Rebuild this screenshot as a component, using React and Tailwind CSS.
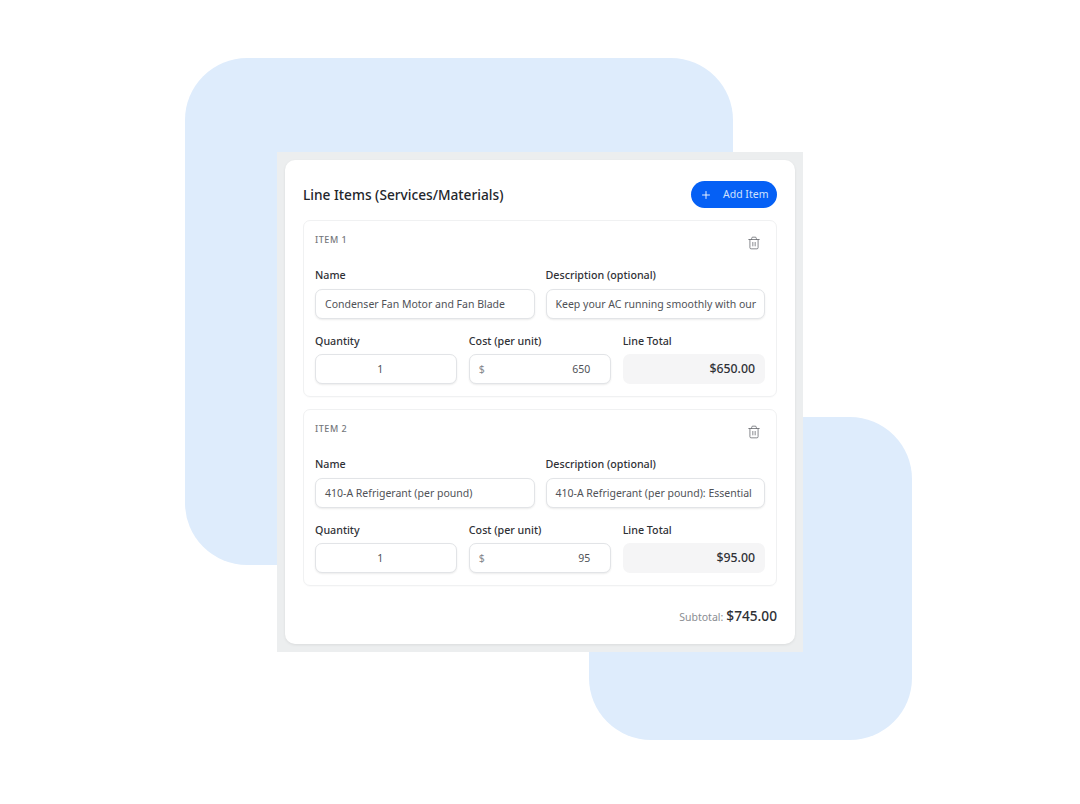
import { Plus, Trash2 } from 'lucide-react';

const items = [
  { id: 1, name: 'Condenser Fan Motor and Fan Blade', desc: 'Keep your AC running smoothly with our', cost: '650', total: '$650.00' },
  { id: 2, name: '410-A Refrigerant (per pound)', desc: '410-A Refrigerant (per pound): Essential', cost: '95', total: '$95.00' },
];

function Label({ children, className = 'mb-[7px]' }) {
  return <div className={`h-[13px] flex items-center text-[10.7px] font-medium text-[#2f3136] ${className}`}>{children}</div>;
}

const boxCls = 'h-[30px] rounded-[7px] border border-[#e2e4e7] bg-white shadow-[0_1px_2px_rgba(0,0,0,0.08)] flex items-center pt-px text-[10.5px] text-[#505257]';

function LineItem({ item }) {
  return (
    <div className="h-[177px] rounded-[7px] border border-[#f0f1f2] px-[11px] shadow-[0_1px_1px_rgba(0,0,0,0.02)]">
      <div className="h-[48px] flex justify-between items-start">
        <span className="mt-[12px] text-[9px] leading-[13px] font-medium tracking-[0.06em] text-[#74777c]">ITEM {item.id}</span>
        <Trash2 size={14} strokeWidth={1.3} className="mt-[15px] mr-[4px] text-[#63666b]" />
      </div>
      <div className="grid grid-cols-2 gap-x-[11px]">
        <div>
          <Label>Name</Label>
          <div className={`${boxCls} px-[9px]`}>{item.name}</div>
        </div>
        <div>
          <Label>Description (optional)</Label>
          <div className={`${boxCls} px-[9px] whitespace-nowrap overflow-hidden`}>{item.desc}</div>
        </div>
      </div>
      <div className="grid grid-cols-3 gap-x-[11.5px] mt-[16px]">
        <div>
          <Label className="mb-[6px]">Quantity</Label>
          <div className={`${boxCls} justify-center pr-[12px]`}>1</div>
        </div>
        <div>
          <Label className="mb-[6px]">Cost (per unit)</Label>
          <div className={`${boxCls} justify-between px-[9px] mt-px text-[#5c5f64]`}>
            <span className="text-[#85888d]">$</span>
            <span className="mr-[11px]">{item.cost}</span>
          </div>
        </div>
        <div>
          <Label className="mb-[6px]">Line Total</Label>
          <div className="h-[30px] rounded-[7px] bg-[#f5f5f6] flex items-center justify-end px-[10px] text-[12.3px] font-medium text-[#2f3136]">{item.total}</div>
        </div>
      </div>
    </div>
  );
}

export default function App() {
  return (
    <div className="relative w-[1080px] h-[804px] overflow-hidden bg-white flex items-center justify-center font-['Noto_Sans',sans-serif]">
      {/* background blobs */}
      <div className="absolute left-[185px] top-[58px] w-[548px] h-[507px] rounded-[62px] bg-[#deecfc]" />
      <div className="absolute left-[589px] top-[417px] w-[323px] h-[323px] rounded-[62px] bg-[#deecfc]" />

      <div className="relative w-[526px] h-[500px] p-2 bg-[#eceeef]">
        <div className="h-full rounded-[10px] bg-white px-[18px] pt-[21px] shadow-[0_1px_3px_rgba(0,0,0,0.08)]">
          <div className="flex items-center justify-between h-[27px] mb-[12px]">
            <h2 className="pt-px text-[13.7px] font-medium text-[#23262b]">Line Items (Services/Materials)</h2>
            <button className="w-[86px] h-[27px] rounded-full bg-[#0560f5] flex items-center pl-[9px] text-[10.5px] text-[#cfe0fd]">
              <Plus size={12} strokeWidth={1.8} className="text-white" />
              <span className="ml-[11px]">Add Item</span>
            </button>
          </div>
          <div className="flex flex-col gap-[12px]">
            {items.map(it => <LineItem key={it.id} item={it} />)}
          </div>
          <div className="mt-[20px] flex items-baseline justify-end gap-[3px]">
            <span className="text-[10.5px] text-[#8a8d92]">Subtotal:</span>
            <span className="text-[13.7px] font-medium text-[#2f3136]">$745.00</span>
          </div>
        </div>
      </div>
    </div>
  );
}
